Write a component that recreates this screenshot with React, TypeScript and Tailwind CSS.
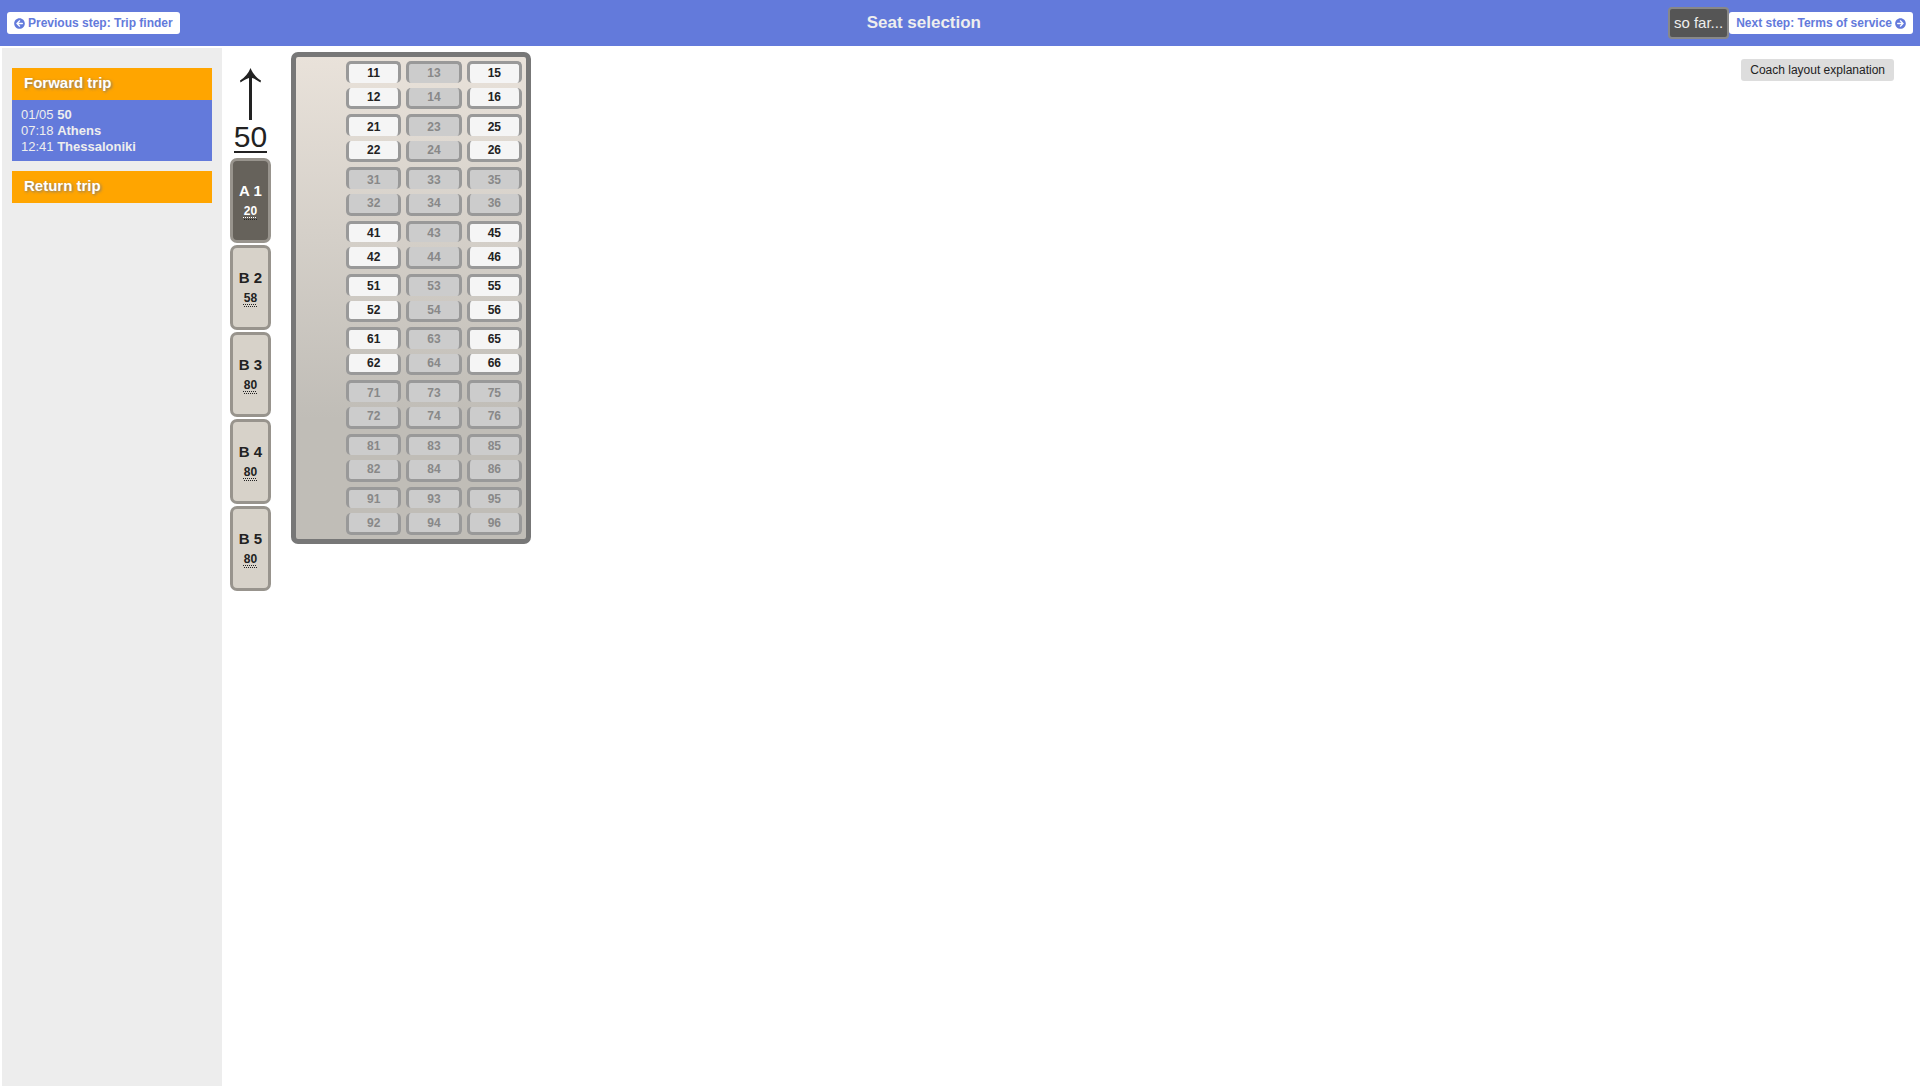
import React from 'react';
import { FaArrowCircleLeft, FaArrowCircleRight } from 'react-icons/fa';

const coaches = [
  { name: 'A 1', free: 20, active: true },
  { name: 'B 2', free: 58 },
  { name: 'B 3', free: 80 },
  { name: 'B 4', free: 80 },
  { name: 'B 5', free: 80 },
];

const rows = [1, 2, 3, 4, 5, 6, 7, 8, 9];
const openRows = [1, 2, 4, 5, 6];

const Seat: React.FC<{ row: number; place: number }> = ({ row, place }) => {
  const isFree = openRows.includes(row) && place !== 3 && place !== 4;
  const isTop = place % 2 === 1;
  return (
    <button
      type="button"
      disabled={!isFree}
      className={`flex flex-1 items-center justify-center rounded-[5px] border-x-3 border-[#999] text-xs leading-none font-bold ${
        isTop ? 'border-t-3' : 'border-b-3'
      } ${isFree ? 'bg-[#f5f5f5] text-[#222]' : 'bg-[#ccc] text-[#888]'}`}
    >
      {row}{place}
    </button>
  );
};

const App: React.FC = () => {
  return (
    <div className="flex min-h-screen flex-col bg-white font-['Liberation_Sans',Arial,sans-serif] text-[#222]">
      {/* Step navigation */}
      <header className="flex h-[46px] items-center justify-between bg-[#637adb] px-[7px]">
        <button type="button" className="flex h-[22px] items-center gap-[3px] rounded-[3px] bg-white px-[7px] text-xs font-bold text-[#637adb]">
          <FaArrowCircleLeft size={11} />
          Previous step: Trip finder
        </button>
        <h1 className="text-[17px] font-bold text-[#eee]">Seat selection</h1>
        <div className="flex items-center">
          <button type="button" className="h-8 rounded-[4px] border-2 border-[#888] bg-[#555] px-1 text-[15px] text-[#eee]">
            so far...
          </button>
          <button type="button" className="flex h-[22px] items-center gap-[3px] rounded-[3px] bg-white px-[7px] text-xs font-bold text-[#637adb]">
            Next step: Terms of service
            <FaArrowCircleRight size={11} />
          </button>
        </div>
      </header>

      <div className="flex flex-1">
        {/* Trips */}
        <aside className="m-0.5 w-[220px] shrink-0 bg-[#ededed] px-2.5 pt-5">
          <h2 className="h-8 bg-[#ffa500] px-3 text-[15px] leading-[30px] font-bold text-white text-shadow-[1px_1px_3px_#777]">Forward trip</h2>
          <div className="mb-2.5 bg-[#637adb] px-[9px] pt-[7px] pb-1.5 text-[13px] leading-4 text-[#eee]">
            <p>01/05 <b>50</b></p>
            <p>07:18 <b>Athens</b></p>
            <p>12:41 <b>Thessaloniki</b></p>
          </div>
          <h2 className="h-8 bg-[#ffa500] px-3 text-[15px] leading-[30px] font-bold text-white text-shadow-[1px_1px_3px_#777]">Return trip</h2>
        </aside>

        <main className="flex flex-1 items-start pt-1.5 pr-[26px] pl-1.5">
          {/* Train and its coaches */}
          <nav className="flex w-[41px] flex-col items-center gap-0.5 pt-4">
            <svg width="21" height="52" viewBox="0 0 21 52" className="shrink-0" aria-hidden="true">
              <path d="M10.5 0C12.5 5 16 9.5 21 12.5L20.5 14.5C17.5 12.5 14.5 10.5 12 10V52H9V10C6.5 10.5 3.5 12.5 .5 14.5L0 12.5C5 9.5 8.5 5 10.5 0Z" fill="#222" />
            </svg>
            <span className="mb-[3px] border-b-2 border-[#222] text-3xl leading-[29px]">50</span>
            {coaches.map((coach) => (
              <button
                key={coach.name}
                type="button"
                className={`flex h-[85px] w-full flex-col items-center justify-center gap-0.5 rounded-[7px] border-3 border-[#98948d] font-bold ${
                  coach.active ? 'bg-[#66625b] text-white' : 'bg-[#d7d2c9]'
                }`}
              >
                <span className="text-[15px] leading-5">{coach.name}</span>
                <span className="border-b border-dotted border-[#222] text-xs leading-4 underline decoration-dotted decoration-1 underline-offset-2">
                  {coach.free}
                </span>
              </button>
            ))}
          </nav>

          {/* Seat map */}
          <section className="ml-5 h-[492px] w-60 rounded-[7px] border-5 border-[#777] bg-linear-to-b from-[#e9e2da] to-[#c0bdb7] to-75% pt-1 pr-1 pb-1 pl-[50px]">
            <div className="grid h-full grid-rows-9 gap-[5px]">
              {rows.map((row) => (
                <div key={row} className="grid grid-cols-3 gap-[5px]">
                  {[1, 3, 5].map((place) => (
                    <div key={place} className="flex flex-col gap-[5px]">
                      <Seat row={row} place={place} />
                      <Seat row={row} place={place + 1} />
                    </div>
                  ))}
                </div>
              ))}
            </div>
          </section>

          <button type="button" className="mt-[7px] ml-auto h-[22px] rounded-[3px] bg-[#ddd] px-[9px] text-xs">
            Coach layout explanation
          </button>
        </main>
      </div>
    </div>
  );
};

export default App;
